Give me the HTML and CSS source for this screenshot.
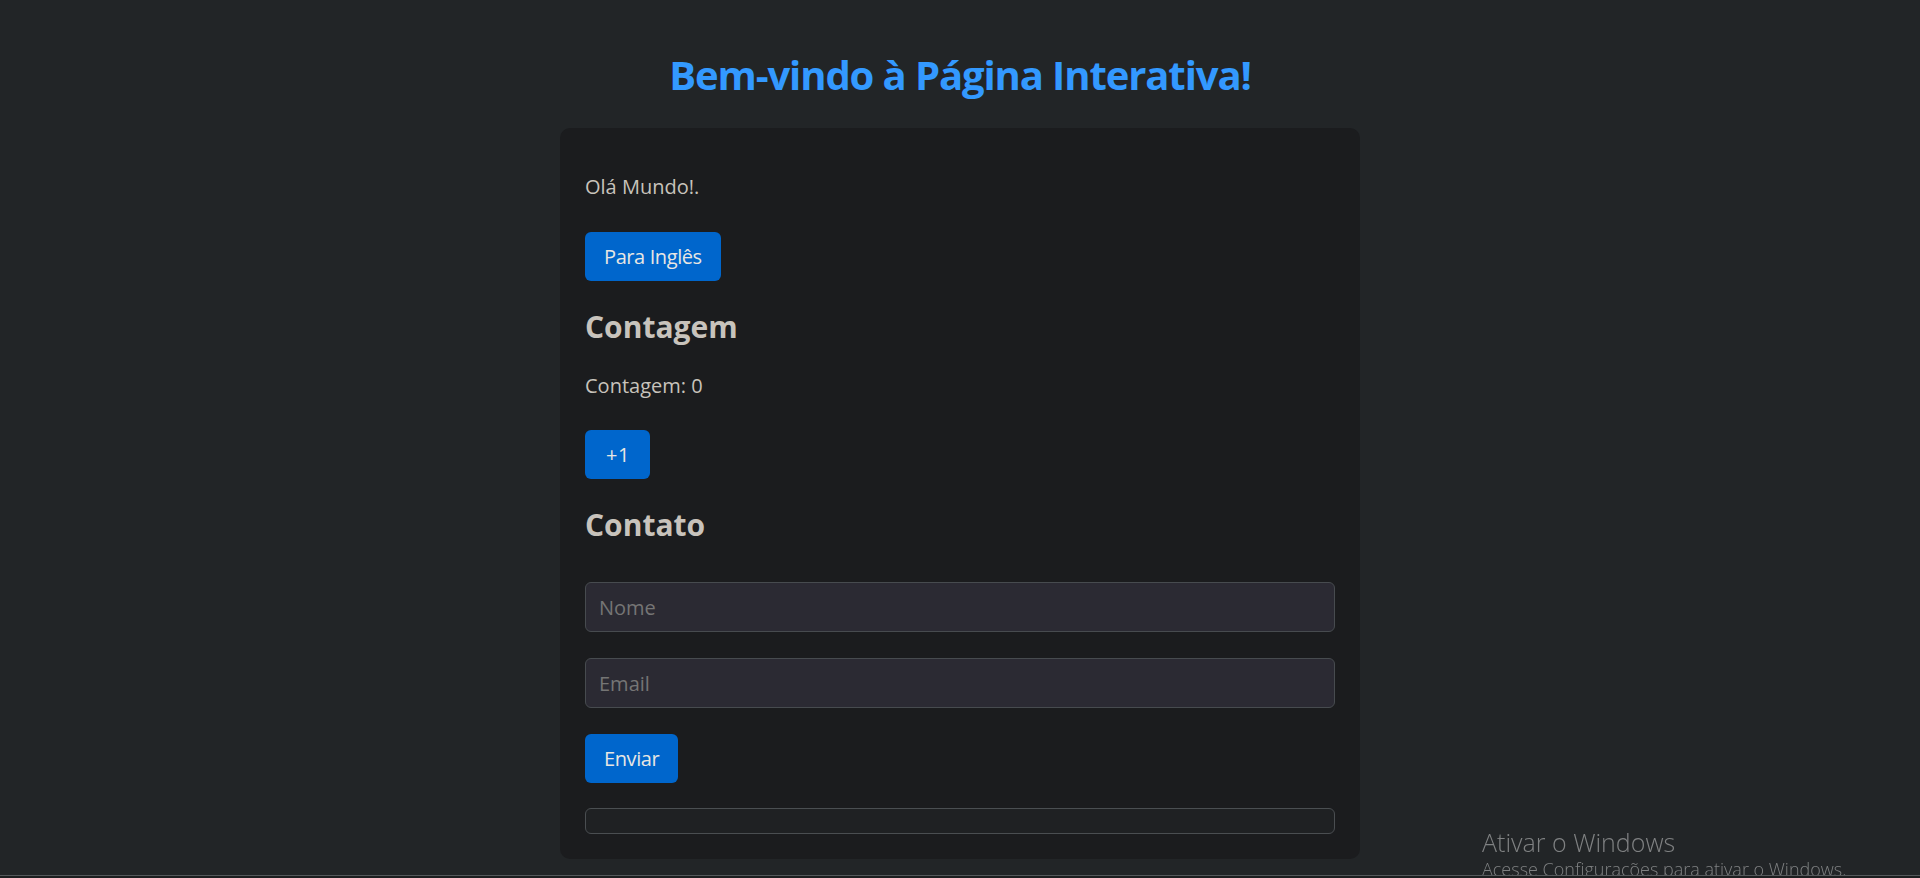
FILE: index.html
```html
<!DOCTYPE html>
<html lang="pt-BR">
<head>
<meta charset="utf-8">
<title>Página Interativa</title>
<link rel="stylesheet" href="styles.css">
</head>
<body>
  <header class="top">
    <h1 class="title">Bem-vindo à Página Interativa!</h1>
  </header>
  <main class="card">
    <p class="text greet">Olá Mundo!.</p>
    <button class="btn btn-lang" type="button">Para Inglês</button>
    <h2 class="section-title sec-count">Contagem</h2>
    <p class="text count">Contagem: 0</p>
    <button class="btn btn-plus" type="button">+1</button>
    <h2 class="section-title sec-contact">Contato</h2>
    <form class="form">
      <input class="field field-name" type="text" placeholder="Nome">
      <input class="field field-email" type="email" placeholder="Email">
      <button class="btn btn-send" type="button">Enviar</button>
    </form>
    <div class="result"></div>
  </main>
  <div class="watermark">
    <div class="wm-title">Ativar o Windows</div>
    <div class="wm-sub">Acesse Configurações para ativar o Windows.</div>
  </div>
  <div class="screen-edge"></div>
</body>
</html>
```
FILE: styles.css
```css
* { box-sizing: border-box; }

html, body {
  margin: 0;
  padding: 0;
  height: 100%;
}

body {
  background: #222527;
  color: #c8c3bc;
  font-family: "Open Sans", "Noto Sans", "DejaVu Sans", sans-serif;
  font-size: 20px;
  overflow: hidden;
}

.top {
  padding-top: 51px;
}

.title {
  margin: 0;
  text-align: center;
  font-size: 40px;
  line-height: 48px;
  font-weight: 700;
  letter-spacing: -1.1px;
  color: #3399ff;
}

.card {
  width: 800px;
  margin: 29px auto 0;
  padding: 25px;
  background: #1b1c1e;
  border-radius: 10px;
  display: flex;
  flex-direction: column;
  align-items: flex-start;
}

.text {
  margin: 0;
  font-size: 20px;
  line-height: 28px;
  color: #c8c3bc;
}

.greet { margin-top: 20px; }
.count { margin-top: 25px; }

.btn {
  height: 49px;
  padding: 0 19px;
  border: none;
  border-radius: 6px;
  background: #0066cc;
  color: #e8e6e3;
  font-family: inherit;
  font-size: 20px;
  line-height: 49px;
  letter-spacing: -0.4px;
  cursor: pointer;
}

.btn-lang { margin-top: 31px; }
.btn-plus { margin-top: 30px; padding: 0 20px 0 21px; letter-spacing: 0.5px; }

.section-title {
  margin: 26px 0 0;
  font-size: 30px;
  line-height: 40px;
  font-weight: 700;
  color: #c8c3bc;
}

.form {
  width: 100%;
  margin-top: 37px;
  display: flex;
  flex-direction: column;
  align-items: flex-start;
  gap: 26px;
}

.field {
  width: 100%;
  height: 50px;
  padding: 0 13px;
  background: #2b2a33;
  border: 1px solid #474b4f;
  border-radius: 6px;
  color: #e8e6e3;
  font-family: inherit;
  font-size: 20px;
  outline: none;
}

.field::placeholder {
  color: #757575;
}

.result {
  width: 100%;
  height: 26px;
  margin-top: 25px;
  background: #1f2123;
  border: 1px solid #4a4e51;
  border-radius: 6px;
}

.watermark {
  position: fixed;
  left: 1482px;
  top: 826px;
  color: #7f8182;
  font-family: "Open Sans", "Noto Sans", sans-serif;
  font-weight: 400;
  pointer-events: none;
}

.wm-title {
  font-size: 25px;
  line-height: 32px;
  font-weight: 300;
}

.wm-sub {
  font-size: 18px;
  line-height: 22px;
  font-weight: 300;
}

.screen-edge {
  position: fixed;
  left: 0;
  right: 0;
  top: 875px;
  height: 3px;
  background: #1d1f20;
  border-top: 1px solid #55595b;
}
```
